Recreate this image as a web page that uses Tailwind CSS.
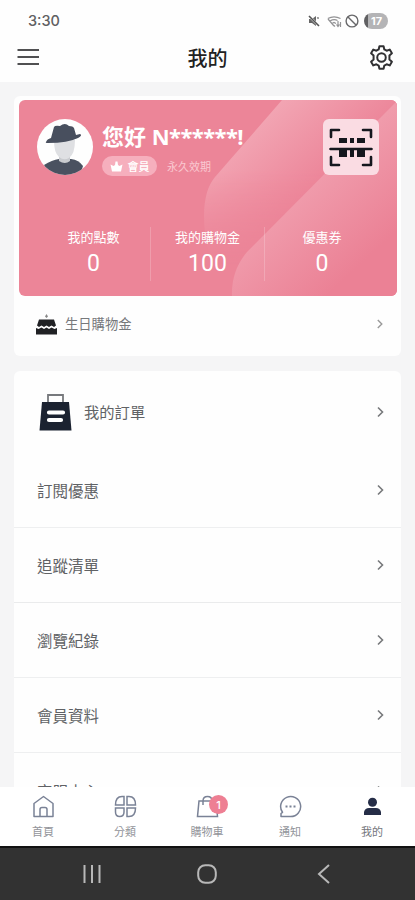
<!DOCTYPE html>
<html lang="zh-Hant">
<head>
<meta charset="utf-8">
<meta name="viewport" content="width=device-width, initial-scale=1">
<title>我的</title>
<script src="https://cdn.jsdelivr.net/npm/@tailwindcss/browser@4"></script>
</head>
<body class="bg-[#f5f5f6] font-['Roboto','Noto_Sans_CJK_TC',sans-serif] text-[#606265]">
<div class="flex h-[900px] w-[415px] flex-col overflow-hidden">
  <header class="h-[82px] shrink-0 bg-[#fefefe]">
    <div class="flex h-[42px] items-center justify-between pr-[27px] pl-7">
      <span class="font-['Inter'] text-[14.500px] font-medium text-[#606062]">3:30</span>
      <div class="flex items-center">
        <svg class="mr-[7px] h-3 w-3" viewBox="0 0 12 12"><path d="M1 4h3l4-3v10L4 8H1z" fill="#666"/><path d="M1 1l10 10" stroke="#fefefe" stroke-width="2.4"/><path d="M1 1l10 10M9.500 3.500l1-1" stroke="#555" stroke-width="1.600"/></svg>
        <svg class="mr-[3px] h-[13px] w-[15px]" viewBox="0 0 15 13" fill="none" stroke="#929294" stroke-width="1.200"><path d="M.8 3.500Q7 .1 13.500 3.500M3 6Q7 3.500 10.500 5.500M5 8.500l2-1 2 1M7 10.500l1 1M1 4l6 7M11 6v5m-1.500-1.500L11 11.500l1.500-2M13.500 12V7"/></svg>
        <svg class="mr-[5px] h-[14px] w-[14px]" viewBox="0 0 14 14" fill="none" stroke="#68686a" stroke-width="1.400"><circle cx="7" cy="7" r="5.900"/><path d="M3 3l8 8"/></svg>
        <span class="flex h-4 w-6 items-center justify-center rounded-full bg-[linear-gradient(90deg,#606062_17%,#b4b4b6_17%)] pl-px font-['Inter'] text-[11px] font-bold text-white">17</span>
      </div>
    </div>
    <div class="flex h-[30px] items-center justify-between pr-[21px] pl-[17px]">
      <svg class="h-5 w-[23px]" viewBox="0 0 23 20" stroke="#505052" stroke-width="2"><path d="M.5 3h21.500M.5 10h21.500M.5 17h21.500"/></svg>
      <h1 class="pt-[3px] pl-[6px] text-[20px] leading-7 font-medium text-[#222]">我的</h1>
      <svg class="h-[25px] w-[25px]" viewBox="0 0 24 24" fill="none" stroke="#303032" stroke-width="1.900" stroke-linejoin="round"><path d="M10 1.200h4l.7 3.100 2.200 1.200 3-1.100 2.100 3.500-2.400 2.200v3.800l2.400 2.200-2.100 3.500-3-1.100-2.200 1.200-.7 3.100h-4l-.7-3.100-2.200-1.200-3 1.100L2 16.100l2.400-2.200v-3.800L2 7.900l2.100-3.500 3 1.100 2.200-1.200z"/><circle cx="12" cy="12" r="4.100"/></svg>
    </div>
  </header>

  <main class="flex min-h-0 flex-1 flex-col gap-[15px] overflow-hidden px-[14px] pt-[14px]">
    <section class="h-[260px] shrink-0 rounded-md bg-[#fefefe] px-[5px] pt-1">
      <div class="relative h-[196px] w-[378px] overflow-hidden rounded-md bg-[#ec8598] text-white">
        <svg class="absolute inset-0 h-full w-full" viewBox="0 0 378 196">
          <defs>
            <linearGradient id="a" gradientUnits="userSpaceOnUse" x1="225" y1="35" x2="295" y2="110"><stop stop-color="#f2a5b3"/><stop offset="1" stop-color="#eb7f94"/></linearGradient>
            <linearGradient id="m" x1="0" y1="0" x2="0" y2="1"><stop offset=".35" stop-color="#fff"/><stop offset=".85" stop-color="#000"/></linearGradient>
            <mask id="k"><path d="M0 0H378V196H0z" fill="url(#m)"/></mask>
            <linearGradient id="b" gradientUnits="userSpaceOnUse" x1="265" y1="105" x2="330" y2="175"><stop stop-color="#f09cac"/><stop offset="1" stop-color="#eb8195"/></linearGradient>
          </defs>
          <path d="M263 0H378V196H210Q185 160 185 116Q185 90 196 77z" fill="url(#a)" mask="url(#k)"/>
          <path d="M378 1L228 152Q212 171 213 196H378z" fill="url(#b)"/>
        </svg>
        <div class="relative flex pt-[19px] pl-[18px]">
          <svg class="h-14 w-14 shrink-0" viewBox="0 0 56 56"><defs><clipPath id="c"><circle cx="28" cy="28" r="28"/></clipPath></defs><g clip-path="url(#c)"><path d="M0 0h56v56H0z" fill="#fefefe"/><path d="M7 46q8-5 15-6h12q8 1 12 7l-3 10H12z" fill="#4a5160"/><path d="M22 36h11v6q-5 4-11 0z" fill="#c9cbcf"/><path d="M17 21h21q0 14-6 18-5 3-10-1-5-4-5-17z" fill="#dfe0e3"/><path d="M9 23q1-3 5-4l3-11q1-2 6-1 5-4 9 0 4 0 5 2l2 7 4-1q3 1-2 4-10 5-30 5-3 0-2-1z" fill="#484f5e"/></g></svg>
          <div class="flex flex-col items-start pl-[9px]">
            <h2 class="h-[29px] pt-px font-['Open_Sans','Noto_Sans_CJK_TC',sans-serif] text-[22px] leading-8 font-bold whitespace-nowrap"><span>您好 </span><span class="tracking-[-0.6px]">N******!</span></h2>
            <div class="mt-[8px] flex items-center">
              <span class="flex h-5 w-[55px] items-center justify-center gap-[5px] rounded-full bg-[#f6afbd] text-[11px] font-medium"><svg class="h-[13px] w-[13px]" viewBox="0 0 13 12" fill="#fff"><path d="M2 11L.5 4l3 1.500L5 4.500 5.500 1h2L8 4.500l1.500 1 3-1.500L11 11z"/></svg><span class="pt-[3px]">會員</span></span>
              <span class="pt-[4px] pl-[10px] text-[11px] text-[#fac9d1]">永久效期</span>
            </div>
          </div>
          <div class="absolute top-[19px] left-[304px] flex h-14 w-14 items-center justify-center rounded-md bg-[#fadce3]">
            <svg class="h-11 w-11" viewBox="0 0 44 44" fill="none" stroke="#15171e" stroke-width="2.600" stroke-linecap="round" stroke-linejoin="round"><path d="M2 12V5h8M34 5h8v7M2 32v8h8M34 40h8v-8M1.500 24h41"/><path d="M10 13h8v5h-8zM21 13h4v5h-4zM28 13h8v5h-8zM10 24h8v8h-8zM21 24h4v8h-4zM28 24h8v8h-8z" fill="#15171e" stroke="none"/></svg>
          </div>
        </div>
        <div class="relative mx-[18px] mt-[50px] grid grid-cols-3 divide-x divide-white/20 text-center">
          <div class="h-[54px]"><p class="text-[13px] leading-[21px]">我的點數</p><p class="text-[23px] leading-[32px]">0</p></div>
          <div class="h-[54px]"><p class="text-[13px] leading-[21px]">我的購物金</p><p class="text-[23px] leading-[32px]">100</p></div>
          <div class="h-[54px]"><p class="text-[13px] leading-[21px]">優惠券</p><p class="text-[23px] leading-[32px]">0</p></div>
        </div>
      </div>
      <div class="flex h-[57px] items-center pr-[13px] pl-[17px]">
        <svg class="h-[22px] w-[21px]" viewBox="0 0 21 22"><path d="M10.500 0l1.500 2.500-1.500 1.500L9 2.500z" fill="#888"/><path d="M3 5.500h15l2 6-2 1.500-2.500-1.500-2.500 1.500-2.500-1.500L8 13l-2.500-1.500L3 13l-2-1.500zM0 14l2.500 1 3-1.500L8 15l2.500-1.500L13 15l2.500-1.500 3 1.500 2.500-1v6.500H0z" fill="#202124"/></svg>
        <span class="pt-px pl-2 text-[13.300px] text-[#77797c]">生日購物金</span>
        <svg class="mb-[2px] ml-auto h-[10px] w-[6px]" viewBox="0 0 6 10" fill="none" stroke="#999" stroke-width="1.400"><path d="M.8 1l4 4-4 4"/></svg>
      </div>
    </section>

    <section class="shrink-0 rounded-md bg-[#fefefe]">
      <div class="flex h-[82px] items-center pr-[17px] pl-[25px]">
        <svg class="h-[38px] w-[33px]" viewBox="0 0 33 38"><path d="M9 10V2h15v8" fill="none" stroke="#77797d" stroke-width="1.800"/><path d="M3 9h27l2.500 28.500H.5z" fill="#1b2230"/><path d="M10 19.500h14M10 27h12" stroke="#fff" stroke-width="4.200" stroke-linecap="round"/></svg>
        <span class="pt-[3px] pl-3 text-[15.300px]">我的訂單</span>
        <svg class="ml-auto h-3 w-[7px]" viewBox="0 0 7 12" fill="none" stroke="#77797b" stroke-width="1.600"><path d="M1 1.500L5.500 6 1 10.500"/></svg>
      </div>
      <div class="flex h-[75px] items-center border-b border-[#eeeff0] pr-[17px] pl-[23px]"><span class="pt-[6px] text-[15.500px]">訂閱優惠</span><svg class="ml-auto h-3 w-[7px]" viewBox="0 0 7 12" fill="none" stroke="#77797b" stroke-width="1.600"><path d="M1 1.500L5.500 6 1 10.500"/></svg></div>
      <div class="flex h-[75px] items-center border-b border-[#eaebec] pr-[17px] pl-[23px]"><span class="pt-[6px] text-[15.500px]">追蹤清單</span><svg class="ml-auto h-3 w-[7px]" viewBox="0 0 7 12" fill="none" stroke="#77797b" stroke-width="1.600"><path d="M1 1.500L5.500 6 1 10.500"/></svg></div>
      <div class="flex h-[75px] items-center border-b border-[#eeeff0] pr-[17px] pl-[23px]"><span class="pt-[6px] text-[15.500px]">瀏覽紀錄</span><svg class="ml-auto h-3 w-[7px]" viewBox="0 0 7 12" fill="none" stroke="#77797b" stroke-width="1.600"><path d="M1 1.500L5.500 6 1 10.500"/></svg></div>
      <div class="flex h-[75px] items-center border-b border-[#eeeff0] pr-[17px] pl-[23px]"><span class="pt-[6px] text-[15.500px]">會員資料</span><svg class="ml-auto h-3 w-[7px]" viewBox="0 0 7 12" fill="none" stroke="#77797b" stroke-width="1.600"><path d="M1 1.500L5.500 6 1 10.500"/></svg></div>
      <div class="flex h-[75px] items-center pr-[17px] pl-[23px]"><span class="pt-[7px] text-[15.500px]">客服中心</span><svg class="ml-auto h-3 w-[7px]" viewBox="0 0 7 12" fill="none" stroke="#77797b" stroke-width="1.600"><path d="M1 1.500L5.500 6 1 10.500"/></svg></div>
    </section>
  </main>

  <nav class="grid h-[59px] shrink-0 grid-cols-[84px_82px_82px_83px_84px] bg-white text-[11px] leading-4 text-[#92949a]">
    <div class="flex flex-col items-center gap-[7px] pt-[8px] pl-[2px]"><svg class="h-[23px] w-[23px]" viewBox="0 0 23 23" fill="none" stroke="#7a8296" stroke-width="1.500"><path d="M2 8.500L11.500 1.500 21 8.500V21.500H2z" stroke-linejoin="round"/><path d="M8 21.500v-7q0-2 2-2h3q2 0 2 2v7"/></svg><span>首頁</span></div>
    <div class="flex flex-col items-center gap-[7px] pt-[8px]"><svg class="h-[23px] w-[23px]" viewBox="0 0 23 23" fill="none" stroke="#7a8296" stroke-width="1.500"><path d="M10 10H1.500Q1.500 1.500 8 1.500h2zM13 1.500h2q6.500 0 6.500 8.500H13zM1.500 13H10v4q0 4.500-4.300 4.500-4.200 0-4.200-4.500zM13 13h8.500q0 8.500-6.500 8.500h-2z"/></svg><span>分類</span></div>
    <div class="relative flex flex-col items-center gap-[7px] pt-[8px]"><svg class="h-[23px] w-[23px]" viewBox="0 0 23 23" fill="none" stroke="#7a8296" stroke-width="1.500"><path d="M3 6h17l1.500 15.500h-20zM7 10V6q0-4.500 4.500-4.500T16 6"/></svg><span>購物車</span><b class="absolute top-[8px] left-[43px] flex h-[19px] w-[19px] items-center justify-center rounded-full bg-[#ee7f93] font-['Inter'] text-[11px] font-medium text-white">1</b></div>
    <div class="flex flex-col items-center gap-[7px] pt-[8px] pl-px"><svg class="h-[23px] w-[23px]" viewBox="0 0 23 23" fill="none" stroke="#7a8296" stroke-width="1.500"><path d="M2 21.500V18.500l1.500-1.200A10 10 0 1 1 11.500 21.500z" stroke-linejoin="round"/><path d="M6.500 11.500h2M10.500 11.500h2M14.500 11.500h2" stroke-width="2"/></svg><span>通知</span></div>
    <div class="flex flex-col items-center gap-[7px] pt-[8px] pr-[2px]"><svg class="h-[23px] w-[23px]" viewBox="0 0 23 23" fill="#252d47"><circle cx="11.500" cy="7.200" r="4.500"/><path d="M3 20v-3q1-4 5-4h7q4 0 5 4v3z"/></svg><span class="text-[#74767c]">我的</span></div>
  </nav>
  <footer class="flex h-[54px] shrink-0 items-center border-t-2 border-[#111] bg-[#323232] pl-[82px]">
    <svg class="h-5 w-5" viewBox="0 0 20 20" stroke="#b8b8b8" stroke-width="2"><path d="M2.500 1v18M10 1v18M17.500 1v18"/></svg>
    <svg class="ml-[95px] h-5 w-5" viewBox="0 0 20 20" fill="none" stroke="#b8b8b8" stroke-width="2"><rect x="1.200" y="1.200" width="17.600" height="17.600" rx="7"/></svg>
    <svg class="ml-[100px] h-5 w-[13px]" viewBox="0 0 13 20" fill="none" stroke="#b8b8b8" stroke-width="2"><path d="M12 1L2 10l10 9"/></svg>
  </footer>
</div>
</body>
</html>
